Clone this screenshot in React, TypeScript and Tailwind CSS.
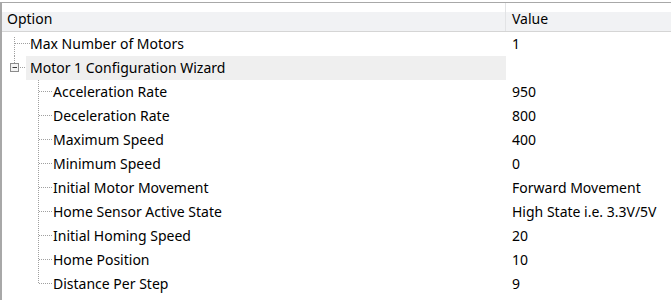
import type { ReactNode } from 'react'

type Row = { label: string; value: string }

const children: Row[] = [
  { label: 'Acceleration Rate', value: '950' },
  { label: 'Deceleration Rate', value: '800' },
  { label: 'Maximum Speed', value: '400' },
  { label: 'Minimum Speed', value: '0' },
  { label: 'Initial Motor Movement', value: 'Forward Movement' },
  { label: 'Home Sensor Active State', value: 'High State i.e. 3.3V/5V' },
  { label: 'Initial Homing Speed', value: '20' },
  { label: 'Home Position', value: '10' },
  { label: 'Distance Per Step', value: '9' },
]

const DOT = '#a0a0a0'

function GridRow({ gutter, label, value, highlight }: { gutter: ReactNode; label: string; value: string; highlight?: boolean }) {
  return (
    <div className="flex h-6 items-stretch">
      <div className="flex w-[504px] shrink-0 items-stretch">
        {gutter}
        <div className={`flex flex-1 items-center pb-[2px] ${highlight ? 'bg-[#efefef] pl-1' : ''}`}>{label}</div>
      </div>
      <div className="flex flex-1 items-center pb-[2px] pl-[6px]">{value}</div>
    </div>
  )
}

export default function App() {
  return (
    <div
      className="h-[300px] w-[671px] overflow-hidden bg-white pt-[2px] text-[14px] text-black"
      style={{ fontFamily: '"Segoe UI", "Noto Sans", "Open Sans", sans-serif' }}
    >
      <div className="h-[298px] border-l-2 border-t border-[#a8a8a8]">
        <div className="flex h-[29px] border-b border-[#d5d5d5] bg-[linear-gradient(to_bottom,#ffffff_0,#ffffff_9px,#f1f2f4_9px,#f1f2f4_100%)]">
          <div className="flex w-[504px] shrink-0 items-center border-r border-[#e2e3e5] pl-[5px] pt-[2px]">Option</div>
          <div className="flex flex-1 items-center pl-[6px] pt-[2px]">Value</div>
        </div>
        <div>
          <GridRow
            label="Max Number of Motors"
            value="1"
            gutter={
              <svg width="28" height="24" className="shrink-0">
                <line x1="12.5" y1="5" x2="12.5" y2="24" stroke={DOT} strokeDasharray="1 1" />
                <line x1="13" y1="11.5" x2="28" y2="11.5" stroke={DOT} strokeDasharray="1 1" />
              </svg>
            }
          />
          <GridRow
            label="Motor 1 Configuration Wizard"
            value=""
            highlight
            gutter={
              <svg width="24" height="24" className="shrink-0">
                <line x1="12.5" y1="0" x2="12.5" y2="7" stroke={DOT} strokeDasharray="1 1" />
                <rect x="8.5" y="7.5" width="8" height="8" fill="#f4f4f4" stroke="#8c8c8c" />
                <line x1="10.5" y1="11.5" x2="15" y2="11.5" stroke="#3a3a3a" />
                <line x1="18" y1="11.5" x2="24" y2="11.5" stroke={DOT} strokeDasharray="1 1" />
              </svg>
            }
          />
          {children.map((row, i) => (
            <GridRow
              key={row.label}
              label={row.label}
              value={row.value}
              gutter={
                <svg width="51" height="24" className="shrink-0">
                  <line
                    x1="36.5"
                    y1="0"
                    x2="36.5"
                    y2={i === children.length - 1 ? 11 : 24}
                    stroke={DOT}
                    strokeDasharray="1 1"
                  />
                  <line x1="37" y1="11.5" x2="51" y2="11.5" stroke={DOT} strokeDasharray="1 1" />
                </svg>
              }
            />
          ))}
        </div>
      </div>
    </div>
  )
}
